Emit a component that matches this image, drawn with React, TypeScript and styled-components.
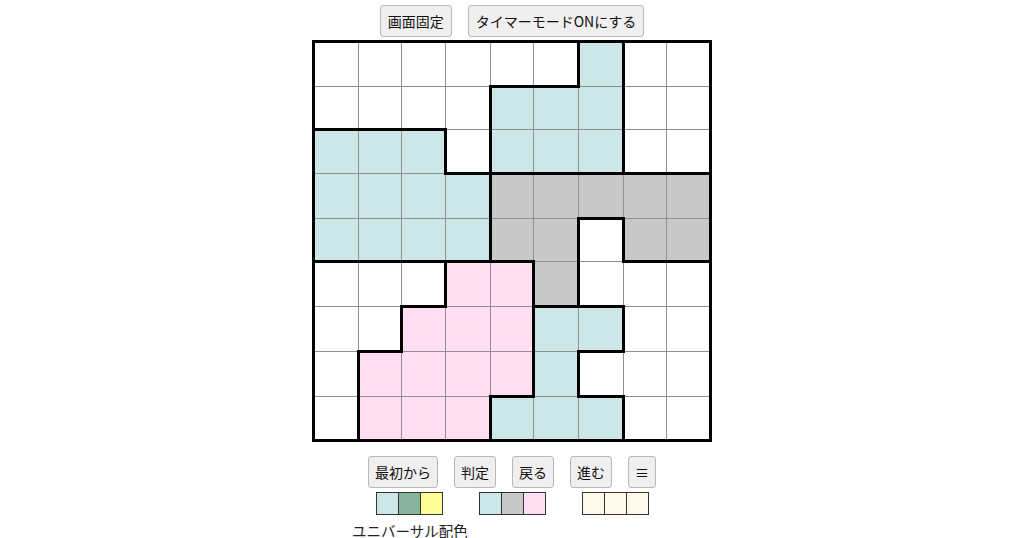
import styled, { createGlobalStyle } from 'styled-components'

const GlobalStyle = createGlobalStyle`
  html, body {
    margin: 0;
    padding: 0;
    background: #ffffff;
    font-family: "Noto Sans CJK JP", "Noto Sans", sans-serif;
  }
`

type Fill = 'w' | 'b' | 'g' | 'p'

const COLORS: Record<Fill, string> = {
  w: '#ffffff',
  b: '#cde6e7',
  g: '#c8c8c8',
  p: '#ffdff1',
}

const BOARD: Fill[][] = [
  'wwwwwwbww',
  'wwwwbbbww',
  'bbbwbbbww',
  'bbbbggggg',
  'bbbbggwgg',
  'wwwppgwww',
  'wwpppbbww',
  'wppppbwww',
  'wpppbbbww',
].map((row) => row.split('') as Fill[])

const THIN = '1px solid #8f8f8f'
const THICK = '3px solid #000'

const edge = (r: number, c: number, dr: number, dc: number) => {
  const nr = r + dr
  const nc = c + dc
  if (nr < 0 || nr > 8 || nc < 0 || nc > 8) return THICK
  return BOARD[r][c] !== BOARD[nr][nc] ? THICK : THIN
}

const PALETTES = [
  ['#cde6e7', '#88b39c', '#ffff99'],
  ['#cde6e7', '#c8c8c8', '#ffdff1'],
  ['#fff9ec', '#fff9ec', '#fff9ec'],
]

const App = () => {
  return (
    <>
      <GlobalStyle />
      <Page>
        <ButtonRow>
          <Button>画面固定</Button>
          <Button>タイマーモードONにする</Button>
        </ButtonRow>
        <Board>
          <tbody>
            {BOARD.map((row, r) => (
              <tr key={r}>
                {row.map((fill, c) => (
                  <Cell
                    key={c}
                    $fill={COLORS[fill]}
                    $top={edge(r, c, -1, 0)}
                    $right={edge(r, c, 0, 1)}
                    $bottom={edge(r, c, 1, 0)}
                    $left={edge(r, c, 0, -1)}
                  />
                ))}
              </tr>
            ))}
          </tbody>
        </Board>
        <ControlRow>
          <ControlButton>最初から</ControlButton>
          <ControlButton>判定</ControlButton>
          <ControlButton>戻る</ControlButton>
          <ControlButton>進む</ControlButton>
          <ControlButton>≡</ControlButton>
        </ControlRow>
        <PaletteRow>
          {PALETTES.map((set, i) => (
            <Palette key={i}>
              {set.map((color, j) => (
                <Swatch key={j} $color={color} />
              ))}
            </Palette>
          ))}
        </PaletteRow>
        <Caption>ユニバーサル配色</Caption>
      </Page>
    </>
  )
}

export default App

const Page = styled.div`
  width: 1024px;
  display: flex;
  flex-direction: column;
  align-items: center;
  padding-top: 5px;
`

const ButtonRow = styled.div`
  display: flex;
  gap: 16px;
  margin-bottom: 3px;
`

const ControlRow = styled.div`
  display: flex;
  gap: 16px;
  margin-top: 14px;
`

const Button = styled.button`
  height: 32px;
  padding: 0 7px;
  font-family: "Noto Sans CJK JP", "Noto Sans", sans-serif;
  font-size: 14px;
  color: #111;
  background: #efefef;
  border: 1px solid #b8b8b8;
  border-radius: 3px;
`

const ControlButton = styled(Button)`
  padding: 0 6px;
`

const Board = styled.table`
  border-collapse: collapse;
  border-spacing: 0;
`

interface CellProps {
  $fill: string
  $top: string
  $right: string
  $bottom: string
  $left: string
}

const Cell = styled.td<CellProps>`
  width: 41.7px;
  height: 41.7px;
  padding: 0;
  background: ${(p) => p.$fill};
  border-top: ${(p) => p.$top};
  border-right: ${(p) => p.$right};
  border-bottom: ${(p) => p.$bottom};
  border-left: ${(p) => p.$left};
`

const PaletteRow = styled.div`
  display: flex;
  gap: 36px;
  margin-top: 4px;
`

const Palette = styled.div`
  display: flex;
  border: 1px solid #333;
`

const Swatch = styled.div<{ $color: string }>`
  width: 21px;
  height: 21px;
  background: ${(p) => p.$color};
  & + & {
    border-left: 1px solid #333;
  }
`

const Caption = styled.div`
  align-self: flex-start;
  margin-left: 352px;
  margin-top: 5px;
  font-size: 14.5px;
  color: #222;
`
